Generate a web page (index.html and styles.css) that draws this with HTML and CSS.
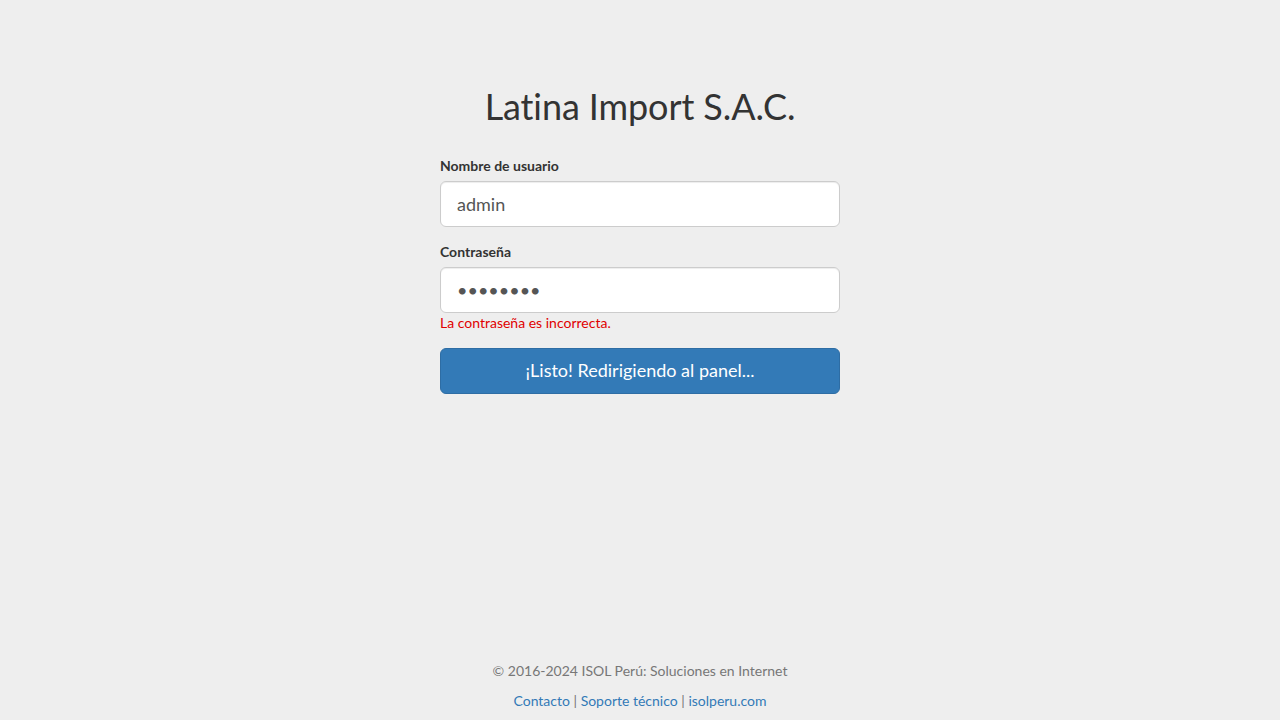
FILE: index.html
```html
<!DOCTYPE html>
<html lang="es">
<head>
<meta charset="utf-8">
<title>Latina Import S.A.C.</title>
<link rel="stylesheet" href="styles.css">
</head>
<body>
<div class="page">
  <main class="login">
    <h1 class="title">Latina Import S.A.C.</h1>
    <form class="form">
      <div class="form-group">
        <label class="label" for="user">Nombre de usuario</label>
        <input class="input" id="user" type="text" value="admin">
      </div>
      <div class="form-group">
        <label class="label" for="pass">Contraseña</label>
        <input class="input" id="pass" type="password" value="12345678">
        <div class="error">La contraseña es incorrecta.</div>
      </div>
      <button class="btn" type="button">¡Listo! Redirigiendo al panel...</button>
    </form>
  </main>
  <footer class="footer">
    <p class="copy">© 2016-2024 ISOL Perú: Soluciones en Internet</p>
    <p class="links"><a href="#">Contacto</a> | <a href="#">Soporte técnico</a> | <a href="#">isolperu.com</a></p>
  </footer>
</div>
</body>
</html>
```

FILE: styles.css
```css
* { box-sizing: border-box; }
html, body { margin: 0; padding: 0; height: 100%; }
body {
  background: #eeeeee;
  color: #333333;
  font-family: Lato, "Liberation Sans", sans-serif;
  font-size: 14px;
  line-height: 20px;
}
.page {
  height: 720px;
  display: flex;
  flex-direction: column;
  align-items: center;
}
.login {
  width: 400px;
  flex: 1;
  padding-top: 86px;
}
.title {
  margin: 0 0 30px;
  font-size: 36px;
  font-weight: 400;
  line-height: 40px;
  text-align: center;
  color: #333;
  letter-spacing: -0.1px;
}
.form-group { margin-bottom: 15px; }
.label {
  display: block;
  font-weight: 700;
  margin-bottom: 5px;
  line-height: 20px;
}
.input {
  display: block;
  width: 100%;
  height: 46px;
  padding: 10px 16px;
  font-family: Lato, "Liberation Sans", sans-serif;
  font-size: 18px;
  line-height: 1.33;
  color: #555;
  background: #fff;
  border: 1px solid #ccc;
  border-radius: 6px;
  box-shadow: inset 0 1px 1px rgba(0,0,0,.075);
}
.error {
  color: #e00000;
  font-size: 14px;
  line-height: 20px;
}
.btn {
  display: block;
  width: 100%;
  height: 46px;
  padding: 10px 16px;
  font-family: Lato, "Liberation Sans", sans-serif;
  font-size: 18px;
  line-height: 1.33;
  color: #fff;
  background: #337ab7;
  border: 1px solid #2e6da4;
  border-radius: 6px;
  cursor: pointer;
}
.footer {
  text-align: center;
  color: #777;
  padding-bottom: 9px;
}
.copy { margin: 0 0 10px; line-height: 20px; }
.links { margin: 0; line-height: 20px; }
.links a { color: #337ab7; text-decoration: none; }
```
